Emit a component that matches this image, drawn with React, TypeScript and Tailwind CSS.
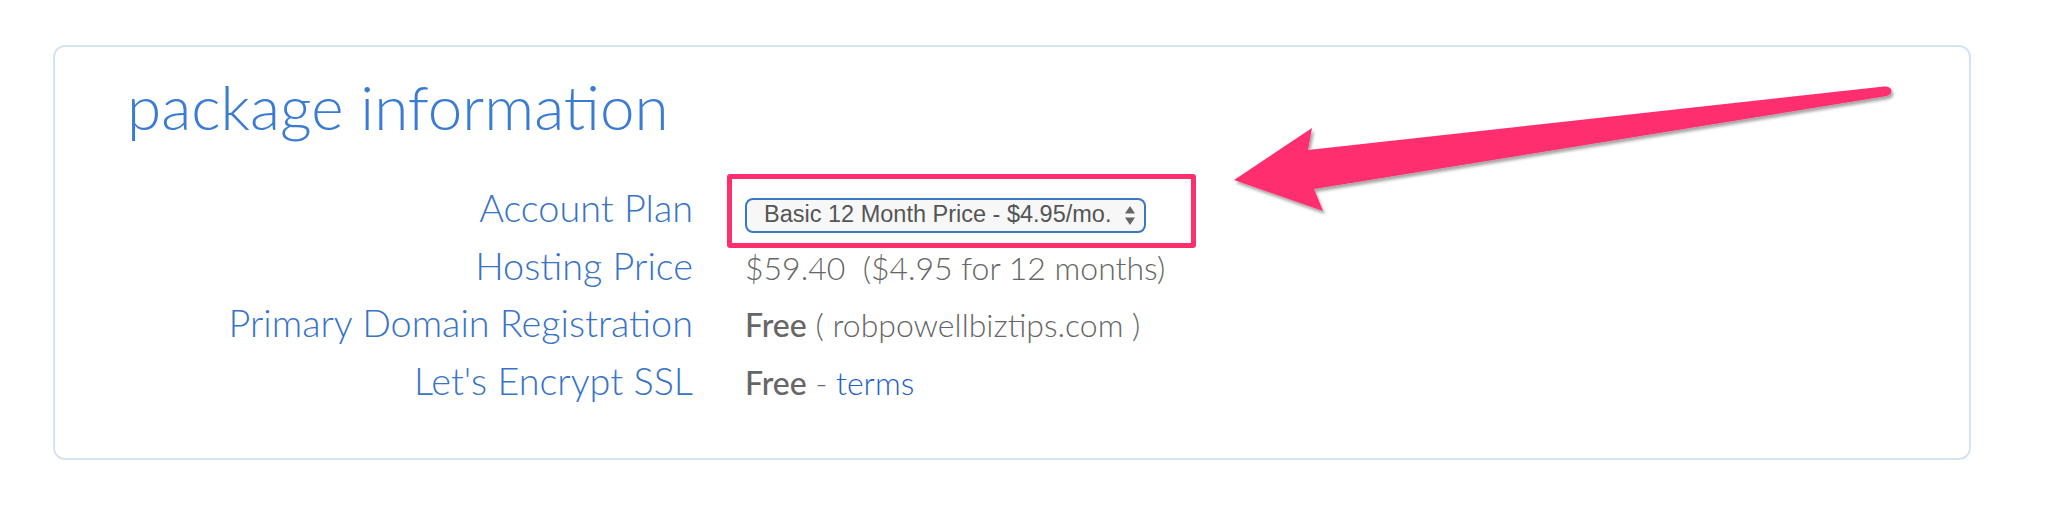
import React from 'react';

const ROWS = [
  { label: 'Hosting Price', value: <span className="whitespace-pre">$59.40  ($4.95 for 12 months)</span> },
  {
    label: 'Primary Domain Registration',
    value: (
      <span>
        <span className="font-medium">Free</span> ( robpowellbiztips.com )
      </span>
    ),
  },
  {
    label: "Let's Encrypt SSL",
    value: (
      <span>
        <span className="font-medium">Free</span> - <a className="text-[#2461c5]">terms</a>
      </span>
    ),
  },
];

const PlanSelect: React.FC = () => (
  <div className="relative inline-block">
    <div className="flex items-center w-[401px] h-[35px] pl-[17px] pr-[9px] bg-[#f7f7f7] border-2 border-[#3b78c4] rounded-[8px] text-[23.5px] text-[#555] font-['Liberation_Sans',Arial,sans-serif] leading-none">
      <span className="flex-1 whitespace-nowrap">Basic 12 Month Price - $4.95/mo.</span>
      <svg className="w-[10px] h-[19px]" viewBox="0 0 10 19" fill="#666">
        <path d="M5 0L10 7.5H0z" />
        <path d="M5 19L0 11.5H10z" />
      </svg>
    </div>
    {/* annotation box */}
    <div className="absolute -left-[18px] -top-[24px] w-[469px] h-[74px] border-[5px] border-[#ff2f6e] rounded-[3px]" />
  </div>
);

const Arrow: React.FC = () => (
  <svg
    className="absolute left-0 top-0 w-[2052px] h-[514px] pointer-events-none"
    viewBox="0 0 2052 514"
  >
    <defs>
      <filter id="shadow" x="-10%" y="-50%" width="120%" height="200%">
        <feDropShadow dx="2" dy="3" stdDeviation="1.5" floodColor="#000" floodOpacity="0.35" />
      </filter>
    </defs>
    <path
      filter="url(#shadow)"
      fill="#ff2f6e"
      d="M1234 180 L1312 128 L1308 150 L1884 86.5 Q1891 86 1891.5 91 Q1891 95.5 1884 96.5 L1314 189 L1323 211 Z"
    />
  </svg>
);

export default function App() {
  return (
    <div className="relative w-[2052px] h-[514px] bg-white pt-[45px] pl-[53px] font-['Lato','Open_Sans',sans-serif]">
      <div className="w-[1918px] border-2 border-[#d5e4f5] rounded-[12px] pt-[22px] pl-[72px] pb-[49px]">
        <h1 className="text-[62px] leading-[1.2] font-light text-[#3a7bd5]">package information</h1>
        <div className="mt-[36px] grid grid-cols-[566px_1fr] gap-x-[52px] text-[37.8px] leading-[57.5px] font-light items-baseline">
          <div className="text-right text-[#3773c7]">Account Plan</div>
          <div className="leading-none">
            <PlanSelect />
          </div>
          {ROWS.map((row) => (
            <React.Fragment key={row.label}>
              <div className="text-right text-[#3773c7]">{row.label}</div>
              <div className="text-[32px] leading-[40px] text-[#666]">{row.value}</div>
            </React.Fragment>
          ))}
        </div>
      </div>
      <Arrow />
    </div>
  );
}
